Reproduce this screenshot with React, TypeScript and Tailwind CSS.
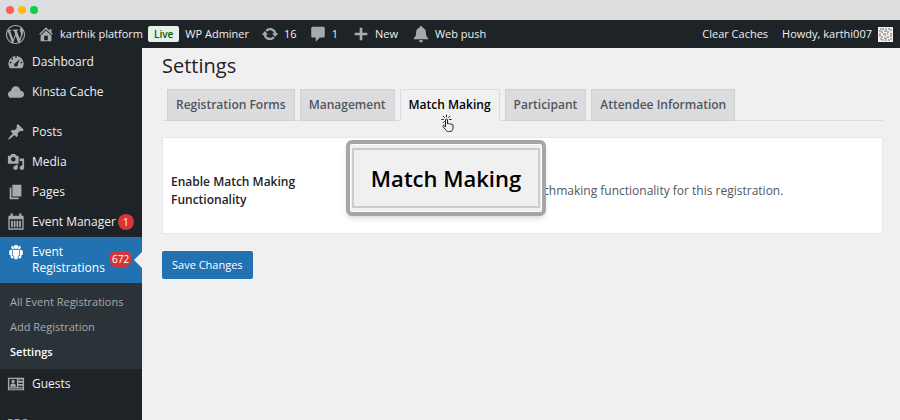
import type { ReactNode } from "react";

const dashicons = {
  wordpress:
    "M20 10c0-5.51-4.49-10-10-10C4.48 0 0 4.49 0 10c0 5.52 4.48 10 10 10 5.51 0 10-4.48 10-10zM7.78 15.37L4.37 6.22c.55-.02 1.17-.08 1.17-.08.5-.06.44-1.13-.06-1.11 0 0-1.45.11-2.37.11-.18 0-.37 0-.58-.01C4.12 2.69 6.87 1.11 10 1.11c2.33 0 4.45.87 6.05 2.34-.68-.11-1.65.39-1.65 1.58 0 .74.45 1.36.9 2.1.35.61.55 1.36.55 2.46 0 1.49-1.4 5-1.4 5l-3.03-8.37c.54-.02.82-.17.82-.17.5-.05.44-1.25-.06-1.22 0 0-1.44.12-2.38.12-.87 0-2.33-.12-2.33-.12-.5-.03-.56 1.2-.06 1.22l.92.08 1.26 3.41zM17.41 10c.24-.64.74-1.87.43-4.25.7 1.29 1.05 2.71 1.05 4.25 0 3.29-1.73 6.24-4.4 7.78.97-2.59 1.94-5.2 2.92-7.78zM6.1 18.09C3.12 16.65 1.11 13.53 1.11 10c0-1.3.23-2.48.72-3.59C3.25 10.3 4.67 14.2 6.1 18.09zm4.03-6.63l2.58 6.98c-.86.29-1.76.45-2.71.45-.79 0-1.57-.11-2.29-.33.81-2.38 1.62-4.74 2.42-7.1z",
  home: "M16 8.5l1.53 1.53-1.06 1.06L10 4.6l-6.47 6.49-1.06-1.06L10 2.5l4 4v-2h2v4zm-6-2.46l6 5.99V18H4v-5.97zM12 17v-5H8v5h4z",
  update:
    "M10.2 3.28c3.53 0 6.43 2.61 6.92 6h2.08l-3.5 4-3.5-4h2.32c-.45-1.97-2.21-3.45-4.32-3.45-1.45 0-2.73.71-3.54 1.78L4.95 5.66C6.23 4.2 8.11 3.28 10.2 3.28zm-.4 13.44c-3.52 0-6.43-2.61-6.92-6H.8l3.5-4c1.17 1.33 2.33 2.67 3.5 4H5.48c.45 1.97 2.21 3.45 4.32 3.45 1.45 0 2.73-.71 3.54-1.78l1.71 1.95c-1.28 1.46-3.15 2.38-5.25 2.38z",
  comment: "M4 2h12c.8 0 1.5.7 1.5 1.5v9c0 .8-.7 1.5-1.5 1.5h-4l-4.5 4.5V14H4c-.8 0-1.5-.7-1.5-1.5v-9C2.5 2.7 3.2 2 4 2z",
  plus: "M17 8.5v3h-5.5V17h-3v-5.5H3v-3h5.5V3h3v5.5z",
  bell: "M10 1c.8 0 1.4.6 1.4 1.3v.6c2.5.6 4 2.7 4 5.3 0 3.6.9 4.8 2.6 6.3v1.3H2v-1.3c1.7-1.5 2.6-2.7 2.6-6.3 0-2.6 1.5-4.7 4-5.3v-.6C8.6 1.6 9.2 1 10 1zM7.6 17h4.800a2.400 2.400 0 0 1-4.800 0z",
  dashboard:
    "M3.200 17A8.500 8.500 0 1 1 16.800 17zM10 3.500a1 1 0 1 0 0 2 1 1 0 0 0 0-2zM5.800 5.300a1 1 0 1 0 0 2 1 1 0 0 0 0-2zM4 9.500a1 1 0 1 0 0 2 1 1 0 0 0 0-2zM16 9.500a1 1 0 1 0 0 2 1 1 0 0 0 0-2zM14.300 6.300L9.600 11.200a2 2 0 1 0 2.300 1.500z",
  cloud: "M15 8.500c2 .1 4 1.700 4 4 0 2.200-1.700 4-4 4H5c-2.200 0-4-1.700-4-3.800 0-2 1.500-3.600 3.500-3.800C4.600 5.800 6.800 3.500 9.800 3.500c2.600 0 4.800 2 5.200 5z",
  pin: "M10.44 3.02l1.82-1.82 6.36 6.35-1.83 1.82c-1.05-.68-2.48-.57-3.41.36l-.75.75c-.92.93-1.04 2.35-.35 3.41l-1.83 1.82-2.41-2.41-2.8 2.79c-.42.42-3.38 2.71-3.8 2.29s1.86-3.39 2.28-3.81l2.79-2.79L4.1 9.36l1.83-1.82c1.05.69 2.48.57 3.4-.36l.75-.75c.93-.92 1.05-2.35.36-3.41z",
  media:
    "M13 11V4c0-.55-.45-1-1-1h-1.67L9 1H5L3.67 3H2c-.55 0-1 .45-1 1v7c0 .55.45 1 1 1h10c.55 0 1-.45 1-1zM7 4.5c1.38 0 2.5 1.12 2.5 2.5S8.38 9.5 7 9.5 4.5 8.38 4.5 7 5.62 4.5 7 4.5zM14 6h5v10.5c0 1.38-1.12 2.5-2.5 2.5S14 17.88 14 16.5s1.12-2.5 2.5-2.5c.17 0 .34.02.5.05V9h-3V6zm-4 8.05V13h2v3.5c0 1.38-1.12 2.5-2.5 2.5S7 17.88 7 16.5 8.12 14 9.5 14c.17 0 .34.02.5.05z",
  page: "M6 15V2h10v13H6zm-1 1h8v2H3V5h2v11z",
  calendar:
    "M4 1.500C4 .7 4.600.3 5.200.3s1.300.4 1.300 1.200V3h7V1.500c0-.8.6-1.200 1.300-1.200s1.200.4 1.200 1.200V3h2.500v15.500h-17V3H4zM3 7v10h14V7zM4.500 8.500h2v7.200h-2zM7.500 8.500h2v7.200h-2zM10.500 8.500h2v7.200h-2zM13.500 8.500h2v7.200h-2z",
  groups:
    "M10 1a2.600 2.600 0 1 1 0 5.200A2.600 2.600 0 0 1 10 1zM5.300 2.200c.7 0 1.300.2 1.700.6-.3 1.300 0 2.600.9 3.500A2.400 2.400 0 1 1 5.300 2.200zM14.700 2.200a2.400 2.400 0 1 1-2.600 4.100c.9-.9 1.200-2.200.9-3.500.4-.4 1-.6 1.700-.6zM8 7.200h4c1.200 0 2 .9 2 2v5l-1.500.8-.5 4H8l-.5-4-1.500-.8v-5c0-1.100.8-2 2-2zM3.300 7.500h2.500c-.5.500-.7 1.200-.7 1.900V15h1.400l.4 2.800H3.700L3.200 14 1.500 13V9.300c0-1 .8-1.800 1.800-1.800zM14.200 7.500h2.500c1 0 1.800.8 1.800 1.800V13l-1.700 1-.5 3.800h-3.200l.4-2.800h1.400V9.400c0-.7-.2-1.400-.7-1.900z",
  id: "M1 3h18v14H1zM2.500 4.500v9H11v-9zM12.500 5v1.500h5V5zM12.500 8.500V10h5V8.500zM12.500 12v1.500h5V12zM2.500 15v.8h15V15zM6.700 5.300a1.900 1.900 0 1 1 0 3.800 1.900 1.900 0 0 1 0-3.800zM3.500 13c0-2.300 1-3.500 3.200-3.500S10 10.700 10 13z",
};

type IconName = keyof typeof dashicons;

const Dashicon = ({ name, className }: { name: IconName; className: string }) => (
  <svg viewBox="0 0 20 20" className={`shrink-0 fill-current ${className}`} fillRule="evenodd" aria-hidden="true">
    <path d={dashicons[name]} />
  </svg>
);

const Avatar = () => (
  <svg viewBox="0 0 15 15" className="size-[15px] shrink-0" aria-hidden="true">
    <path d="M0 0h15v15H0z" fill="#f1f0ef" />
    <path
      d="M2 2h2M5 1v2M7 2h2M11 1v2M12 3h2M1 4h2M4 4v2M6 4h3M10 4v2M2 6v2M13 6v2M5 7h1M7 6v3M9 7h1M1 9h2M12 9h2M4 9v2M6 11h3M10 9v2M2 12h2M5 12v2M7 13h2M11 12v2M12 12h2"
      stroke="#77706d"
      fill="none"
    />
  </svg>
);

const PointerCursor = () => (
  <svg viewBox="0 0 14 18" className="h-[18px] w-3.5" fill="none" stroke="#222" strokeLinecap="round" strokeLinejoin="round" aria-hidden="true">
    <path
      d="M4.500 12.500V6a1 1 0 0 1 2 0v4c.2-.9 1.800-.9 2 .2.300-.8 1.700-.6 1.900.4.400-.7 1.600-.4 1.600.6V14c0 2-1.100 3.500-3.200 3.500H7.500c-1.400 0-2.200-.7-2.800-1.700L2 12.600c-.6-1 .5-1.800 1.300-1.100z"
      fill="#f0f0f1"
    />
    <path d="M5.500 1v1.800M2.200 2.200l1.200 1.200M8.800 2.200L7.600 3.400M.8 5.500h1.700M8.500 5.500h1.700M3.300 7.600L2.300 8.600" />
  </svg>
);

interface MenuItemProps {
  icon: IconName;
  children: ReactNode;
  count?: number;
}

const MenuItem = ({ icon, children, count }: MenuItemProps) => (
  <li>
    <a href="#" className="flex h-[30px] items-center gap-[7px] pl-[7px] text-[#f0f0f1]">
      <Dashicon name={icon} className="size-[18px] text-[#a7aaad]" />
      <span className="flex items-center gap-0.5 whitespace-nowrap">
        {children}
        {count && <span className="flex size-4 shrink-0 items-center justify-center rounded-full bg-[#d63638] text-[10px] text-white">{count}</span>}
      </span>
    </a>
  </li>
);

interface BarLinkProps {
  icon: IconName;
  className: string;
  children: ReactNode;
}

const BarLink = ({ icon, className, children }: BarLinkProps) => (
  <a href="#" className={`flex items-center gap-[5px] ${className}`}>
    <Dashicon name={icon} className="size-[18px] text-[#a7aaad]" />
    {children}
  </a>
);

const tabs = ["Registration Forms", "Management", "Match Making", "Participant", "Attendee Information"];
const activeTab = "Match Making";

const AdminBar = () => (
  <header className="flex h-7 shrink-0 items-center whitespace-nowrap bg-[#1d2327] pl-1.5 pr-[7px] text-[11px] text-[#f0f0f1]">
    <a href="#" aria-label="About WordPress" className="text-[#a7aaad]">
      <Dashicon name="wordpress" className="size-[19px]" />
    </a>
    <BarLink icon="home" className="ml-3">
      karthik platform
    </BarLink>
    <span className="ml-[5px] rounded-xs bg-[#e6f2e8] px-1.5 text-[10px] font-semibold leading-4 text-[#005c12]">Live</span>
    <a href="#" className="ml-1.5">
      WP Adminer
    </a>
    <BarLink icon="update" className="ml-3">
      16
    </BarLink>
    <BarLink icon="comment" className="ml-3">
      1
    </BarLink>
    <BarLink icon="plus" className="ml-3.5">
      New
    </BarLink>
    <BarLink icon="bell" className="ml-3.5">
      Web push
    </BarLink>
    <a href="#" className="ml-auto">
      Clear Caches
    </a>
    <a href="#" className="ml-3.5 flex items-center gap-1.5">
      Howdy, karthi007
      <Avatar />
    </a>
  </header>
);

const Sidebar = () => (
  <nav aria-label="Main menu" className="w-[142px] shrink-0 overflow-hidden bg-[#1d2327] text-[12px]">
    <ul className="-mt-px">
      <MenuItem icon="dashboard">Dashboard</MenuItem>
      <MenuItem icon="cloud">Kinsta Cache</MenuItem>
      <li className="h-2.5" aria-hidden="true" />
      <MenuItem icon="pin">Posts</MenuItem>
      <MenuItem icon="media">Media</MenuItem>
      <MenuItem icon="page">Pages</MenuItem>
      <MenuItem icon="calendar" count={1}>
        Event Manager
      </MenuItem>
      <li>
        <a href="#" className="relative flex h-[46px] bg-[#2271b1] pl-2 pt-[7px] leading-4 text-white">
          <Dashicon name="groups" className="size-4" />
          <span className="ml-2 w-[77px]">Event Registrations</span>
          <span className="mt-[7px] flex h-4 items-center rounded-full bg-[#d63638] px-[3px] text-[10px]">672</span>
          <span className="absolute right-0 top-[15px] border-y-8 border-r-8 border-y-transparent border-r-[#f0f0f1]" />
        </a>
        <ul className="bg-[#2c3338] px-2.5 pb-1 pt-[7px] text-[11px] text-[#a7aaad]">
          <li>
            <a href="#" className="flex h-[25px] items-center whitespace-nowrap">
              All Event Registrations
            </a>
          </li>
          <li>
            <a href="#" className="flex h-[25px] items-center">
              Add Registration
            </a>
          </li>
          <li>
            <a href="#" className="flex h-[25px] items-center font-semibold text-white">
              Settings
            </a>
          </li>
        </ul>
      </li>
      <MenuItem icon="id">Guests</MenuItem>
      <li className="px-[7px] pt-3.5 text-[11px] font-semibold leading-5 text-[#a7aaad]">PRO</li>
    </ul>
  </nav>
);

export default function App() {
  return (
    <div className="flex h-screen flex-col overflow-hidden bg-[#f0f0f1] font-['Open_Sans',sans-serif] text-[#3c434a]">
      <div className="flex h-5 shrink-0 items-center gap-1 bg-[#dcdddf] pl-1.5">
        <span className="size-2 rounded-full bg-[#ff5f57]" />
        <span className="size-2 rounded-full bg-[#febc0b]" />
        <span className="size-2 rounded-full bg-[#14cd45]" />
      </div>
      <AdminBar />
      <div className="flex min-h-0 grow">
        <Sidebar />
        <main className="min-w-0 grow pl-5 pr-[17px] pt-1">
          <h1 className="text-[20px] leading-7 text-[#1d2327]">Settings</h1>
          <nav aria-label="Settings sections" className="mt-[9px] flex gap-[5px] border-b border-[#dcdcde] pl-[5px]">
            {tabs.map((tab) => (
              <a
                key={tab}
                href="#"
                className={`relative -mb-px whitespace-nowrap border px-2 text-[12px] font-semibold leading-[30px] ${
                  tab === activeTab ? "border-[#dcdcde] border-b-[#f0f0f1] bg-[#f0f0f1] text-black" : "border-[#d0d1d4] bg-[#dcdcde] text-[#50575e]"
                }`}
              >
                {tab}
                {tab === activeTab && (
                  <span className="absolute left-10 top-6 z-10">
                    <PointerCursor />
                  </span>
                )}
              </a>
            ))}
          </nav>
          <form>
            <div className="relative mt-4 flex h-[97px] items-center border border-[#e6e6e8] bg-white px-2 pt-2.5">
              <label htmlFor="match-making" className="w-[180px] text-[12px] font-semibold leading-[18px] text-[#1d2327]">
                Enable Match Making Functionality
              </label>
              <input id="match-making" type="checkbox" aria-describedby="match-making-help" className="ml-4 size-3.5" />
              <span id="match-making-help" className="ml-[140px] whitespace-nowrap text-[12px] text-[#50575e]">
                matchmaking functionality for this registration.
              </span>
              <div className="absolute left-[183px] top-0.5 flex h-[76px] w-[200px] rounded-md border-4 border-[#a6a6a6] bg-[#f0f0f1] px-0.5 py-1 shadow-md inset-ring inset-ring-white">
                <div className="flex grow items-center justify-center border-2 border-[#cbccd0] text-[22px] font-semibold text-black">Match Making</div>
              </div>
            </div>
            <button type="button" className="mt-[17px] h-7 rounded-xs bg-[#2271b1] px-2.5 text-[11px] text-white">
              Save Changes
            </button>
          </form>
        </main>
      </div>
    </div>
  );
}
